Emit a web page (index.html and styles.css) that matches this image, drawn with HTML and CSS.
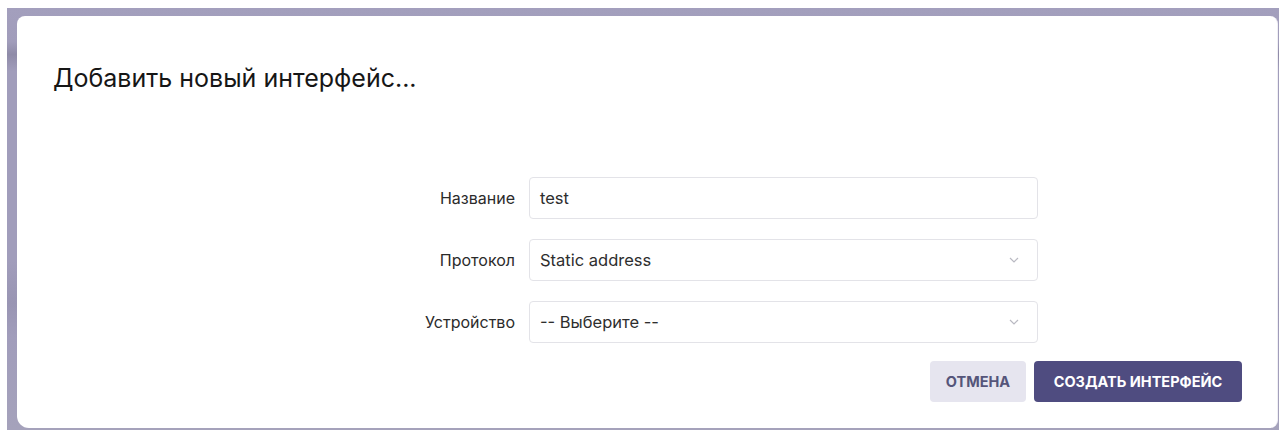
FILE: index.html
```html
<!DOCTYPE html>
<html lang="ru">
<head>
<meta charset="utf-8">
<title>Добавить новый интерфейс</title>
<link rel="stylesheet" href="styles.css">
</head>
<body>
<div class="backdrop">
  <div class="modal">
    <h2 class="modal-title">Добавить новый интерфейс...</h2>
    <form class="form">
      <div class="row">
        <label class="label">Название</label>
        <div class="control"><span class="value">test</span></div>
      </div>
      <div class="row">
        <label class="label">Протокол</label>
        <div class="control select"><span class="value">Static address</span>
          <svg class="chevron" width="10" height="6" viewBox="0 0 10 6"><path d="M1 1l4 4 4-4" fill="none" stroke="#b9b9c2" stroke-width="1.2"/></svg>
        </div>
      </div>
      <div class="row">
        <label class="label">Устройство</label>
        <div class="control select"><span class="value">-- Выберите --</span>
          <svg class="chevron" width="10" height="6" viewBox="0 0 10 6"><path d="M1 1l4 4 4-4" fill="none" stroke="#b9b9c2" stroke-width="1.2"/></svg>
        </div>
      </div>
      <div class="actions">
        <button type="button" class="btn btn-cancel">Отмена</button>
        <button type="button" class="btn btn-primary">Создать интерфейс</button>
      </div>
    </form>
  </div>
</div>
</body>
</html>
```

FILE: styles.css
```css
html, body {
  margin: 0;
  padding: 0;
  background: #ffffff;
  width: 1279px;
  height: 432px;
  overflow: hidden;
  font-family: Inter, "Noto Sans", sans-serif;
}

.backdrop {
  margin: 8px 0 0 7px;
  padding: 8px 1px 2px 10px;
  height: 422px;
  box-sizing: border-box;
  background: linear-gradient(to bottom, #a39fbd 0%, #a19dbb 8%, #8f8ba8 11%, #a19dbb 15%, #a19dbb 60%, #9995b3 70%, #a19dbb 78%, #a5a2bb 100%);
}

.modal {
  background: #ffffff;
  border-radius: 8px 8px 8px 12px;
  height: 412px;
  box-sizing: border-box;
  padding: 46px 35px 0 36px;
  border-right: 1px solid #f0eff4;
}

.modal-title {
  margin: 0;
  font-weight: 400;
  font-size: 25px;
  line-height: 32px;
  color: #161616;
}

.form {
  margin-top: 83px;
}

.row {
  display: flex;
  align-items: center;
  margin-bottom: 20px;
}

.label {
  width: 476px;
  padding-right: 14px;
  box-sizing: border-box;
  text-align: right;
  font-size: 16px;
  color: #2b2b2b;
}

.control {
  width: 509px;
  height: 42px;
  box-sizing: border-box;
  border: 1px solid #e3e3e8;
  border-radius: 4px;
  display: flex;
  align-items: center;
  justify-content: space-between;
  padding: 0 18px 0 10px;
}

.value {
  font-size: 16.5px;
  color: #2e2e2e;
}

.chevron {
  display: block;
}

.actions {
  display: flex;
  justify-content: flex-end;
  gap: 8px;
  margin-top: -2px;
}

.btn {
  height: 41px;
  border: none;
  border-radius: 4px;
  font-family: Inter, "Noto Sans", sans-serif;
  font-weight: 700;
  font-size: 14.5px;
  text-transform: uppercase;
  padding: 0;
}

.btn-cancel {
  background: #e6e5ef;
  color: #55557a;
  width: 96px;
}

.btn-primary {
  background: #4f4c80;
  color: #ffffff;
  width: 208px;
}
```
